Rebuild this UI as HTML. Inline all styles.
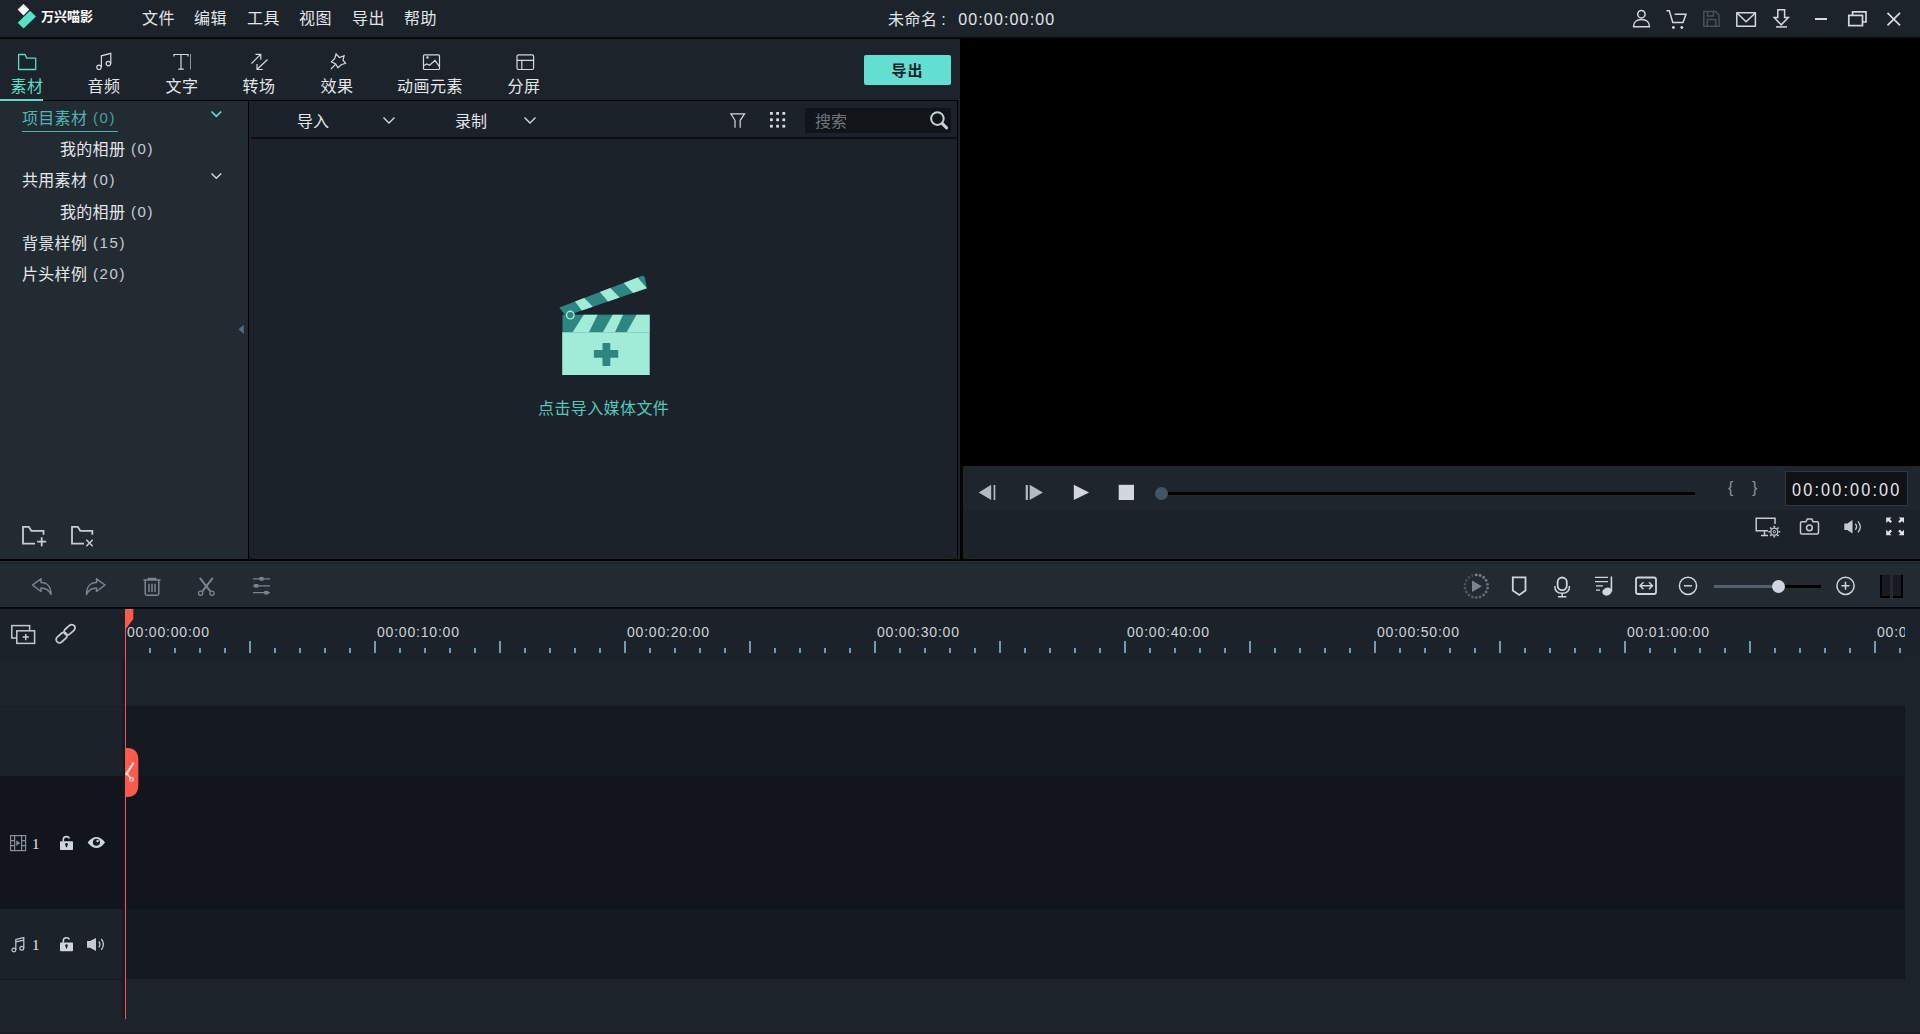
<!DOCTYPE html>
<html lang="zh-CN">
<head>
<meta charset="utf-8">
<title>万兴喵影</title>
<style>
*{box-sizing:border-box;margin:0;padding:0}
html,body{width:1920px;height:1034px;overflow:hidden;background:#1c232b}
body{position:relative;font-family:"Liberation Sans","Noto Sans CJK SC",sans-serif;color:#e2e6ea;font-size:16px}
.abs{position:absolute}
.t{position:absolute;white-space:nowrap;line-height:1}
#icons{position:absolute;left:0;top:0;width:1920px;height:1034px;overflow:hidden}
/* ---------- title bar ---------- */
#titlebar{left:0;top:0;width:1920px;height:37px;background:#1c232b}
#tb-line{left:0;top:36px;width:1920px;height:3px;background:linear-gradient(#181d24 0,#181d24 1px,#0b0e11 1px,#0b0e11 2px,#030405 2px)}
.menu{top:11px;letter-spacing:.5px;font-size:16px;color:#e2e6ea}
#brand{left:41px;top:10px;font-size:13px;font-weight:700;color:#fff}
#title{left:888px;top:12px;letter-spacing:.5px;font-size:16px;color:#e2e6ea}
#title span{letter-spacing:1.15px;margin-left:12px}
/* ---------- tabs ---------- */
#tabs{left:0;top:39px;width:960px;height:61px;background:#1c232b}
.tab{top:79px;letter-spacing:.5px;font-size:16px;color:#e2e6ea;transform:translateX(-50%)}
.tab.on{color:#5fd9c8}
#tab-ul{left:0;top:99px;width:43px;height:2px;background:#5fd9c8}
#tabs-line{left:0;top:100px;width:958px;height:1px;background:#050607}
#export{left:864px;top:55px;width:87px;height:30px;border-radius:2px;background:#63dfcf;color:#13222b;font-size:15px;letter-spacing:1px;padding-left:0;font-weight:700;text-align:center;line-height:31px}
/* ---------- tree ---------- */
#tree{left:0;top:101px;width:248px;height:458px;background:#222a32}
.tr{letter-spacing:.3px;font-size:16px;color:#e2e6ea}
.tr i{font-style:normal;letter-spacing:1.6px;font-size:15px;margin-left:0;position:relative;top:-1px;opacity:.85}
.tr.on{color:#52b4b0}
#tr-ul{left:22px;top:131px;width:96px;height:1px;background:#4fb0ad}
#vline1{left:248px;top:101px;width:1px;height:458px;background:#000}
/* ---------- media ---------- */
#media{left:249px;top:101px;width:708px;height:458px;background:#1c222a}
#media-tl{left:251px;top:137px;width:706px;height:2px;background:#0b0d10}
#vline2{left:957px;top:100px;width:1px;height:459px;background:#000}
#search{left:805px;top:108px;width:146px;height:25px;background:#111419}
.mt{top:114px;font-size:16px;color:#e2e6ea}
#import-tip{left:538px;top:401px;letter-spacing:.4px;font-size:16px;color:#55c7bd}
/* ---------- preview ---------- */
#preview{left:960px;top:39px;width:960px;height:427px;background:#000}
#pv-left{left:960px;top:466px;width:3px;height:93px;background:#000}
#pctl{left:963px;top:466px;width:957px;height:93px;background:linear-gradient(#1f252d 0,#1f252d 44px,#1c222a 44px)}
#ptrack{left:1162px;top:492px;width:533px;height:3px;background:#000}
#pknob{left:1155px;top:487px;width:13px;height:13px;border-radius:50%;background:#435560}
#ptime{left:1785px;top:471px;width:123px;height:35px;background:#0f1216;border:1px solid #2b3947;color:#e6e9ec;font-size:18px;line-height:36px;text-align:center;overflow:hidden}
#ptime span{display:inline-block;letter-spacing:2.4px;transform:scaleX(.9);transform-origin:50% 50%;margin-left:0;white-space:nowrap}
.brace{top:480px;font-size:16px;color:#8c9198}
/* ---------- timeline ---------- */
#hline-mid{left:0;top:559px;width:1920px;height:2px;background:#000}
#tlbar{left:0;top:561px;width:1920px;height:46px;background:#222a32}
#tlbar-sub{left:0;top:563px;width:1920px;height:1px;background:#1c2028}
#tlbar-line{left:0;top:607px;width:1920px;height:2px;background:#07090b}
#ruler{left:0;top:609px;width:1920px;height:48px;background:#1c222a}
#ruler-line{left:0;top:657px;width:1905px;height:2px;background:linear-gradient(#191f26 0,#191f26 1px,#151a21 1px)}
#minor{left:149px;top:648px;width:1756px;height:5px;background:repeating-linear-gradient(90deg,#7499b4 0,#7499b4 2px,transparent 2px,transparent 25px)}
#major{left:249px;top:641px;width:1656px;height:12px;background:repeating-linear-gradient(90deg,#7499b4 0,#7499b4 2px,transparent 2px,transparent 125px)}
.rl{top:625px;font-size:14px;letter-spacing:.8px;color:#cdd2d8}
#rclip{left:126px;top:609px;width:1779px;height:48px;overflow:hidden}
#rclip .rl{top:16px}
.row{left:0;width:1905px}
#hdr-sep{left:123px;top:659px;width:2px;height:360px;background:#131a20}
#zslot{left:1714px;top:585px;width:107px;height:3px;background:#000}
#zfill{left:1714px;top:585px;width:64px;height:3px;background:#52616f}
#zknob{left:1772px;top:580px;width:13px;height:13px;border-radius:50%;background:#d0d6dd}
.bar2{top:575px;width:10px;height:23px;background:#161a21;border:0 solid #000}
.num{font-family:"Liberation Serif",serif;font-size:15px;color:#e6e8ea}
#bottom-line{left:0;top:1032px;width:1920px;height:2px;background:#191d24}
</style>
</head>
<body>
<!-- title bar -->
<div id="titlebar" class="abs"></div>
<div id="tb-line" class="abs"></div>
<div id="brand" class="t">万兴喵影</div>
<div class="t menu" style="left:142px">文件</div>
<div class="t menu" style="left:194px">编辑</div>
<div class="t menu" style="left:247px">工具</div>
<div class="t menu" style="left:299px">视图</div>
<div class="t menu" style="left:352px">导出</div>
<div class="t menu" style="left:404px">帮助</div>
<div id="title" class="t">未命名&#8201;:<span>00:00:00:00</span></div>

<!-- tabs -->
<div id="tabs" class="abs"></div>
<div id="tabs-line" class="abs"></div>
<div id="tab-ul" class="abs"></div>
<div class="t tab on" style="left:27px">素材</div>
<div class="t tab" style="left:104px">音频</div>
<div class="t tab" style="left:182px">文字</div>
<div class="t tab" style="left:259px">转场</div>
<div class="t tab" style="left:337px">效果</div>
<div class="t tab" style="left:430px">动画元素</div>
<div class="t tab" style="left:524px">分屏</div>
<div id="export" class="abs">导出</div>

<!-- tree -->
<div id="tree" class="abs"></div>
<div id="vline1" class="abs"></div>
<div class="t tr on" style="left:22px;top:111px">项目素材<i> (0)</i></div>
<div id="tr-ul" class="abs"></div>
<div class="t tr" style="left:60px;top:142px">我的相册<i> (0)</i></div>
<div class="t tr" style="left:22px;top:173px">共用素材<i> (0)</i></div>
<div class="t tr" style="left:60px;top:205px">我的相册<i> (0)</i></div>
<div class="t tr" style="left:22px;top:236px">背景样例<i> (15)</i></div>
<div class="t tr" style="left:22px;top:267px">片头样例<i> (20)</i></div>

<!-- media -->
<div id="media" class="abs"></div>
<div id="media-tl" class="abs"></div>
<div id="vline2" class="abs"></div>
<div id="search" class="abs"></div>
<div class="t mt" style="left:297px">导入</div>
<div class="t mt" style="left:455px">录制</div>
<div class="t mt" style="left:815px;color:#70757c">搜索</div>
<div id="import-tip" class="t">点击导入媒体文件</div>

<!-- preview -->
<div id="preview" class="abs"></div>
<div id="pv-left" class="abs"></div>
<div id="pctl" class="abs"></div>
<div id="ptrack" class="abs"></div>
<div id="pknob" class="abs"></div>
<div class="t brace" style="left:1728px">{</div>
<div class="t brace" style="left:1752px">}</div>
<div id="ptime" class="abs"><span>00:00:00:00</span></div>

<!-- timeline -->
<div id="hline-mid" class="abs"></div>
<div id="tlbar" class="abs"></div>
<div id="tlbar-sub" class="abs"></div>
<div id="tlbar-line" class="abs"></div>
<div id="zslot" class="abs"></div>
<div id="zfill" class="abs"></div>
<div id="zknob" class="abs"></div>
<div class="abs bar2" style="left:1880px;border-left-width:2px;border-bottom-width:2px"></div>
<div class="abs bar2" style="left:1893px;border-right-width:2px;border-bottom-width:2px"></div>
<div id="ruler" class="abs"></div>
<div id="ruler-line" class="abs"></div>
<div id="minor" class="abs"></div>
<div id="major" class="abs"></div>
<div id="rclip" class="abs">
<div class="t rl" style="left:1px">00:00:00:00</div>
<div class="t rl" style="left:251px">00:00:10:00</div>
<div class="t rl" style="left:501px">00:00:20:00</div>
<div class="t rl" style="left:751px">00:00:30:00</div>
<div class="t rl" style="left:1001px">00:00:40:00</div>
<div class="t rl" style="left:1251px">00:00:50:00</div>
<div class="t rl" style="left:1501px">00:01:00:00</div>
<div class="t rl" style="left:1751px">00:01:10:00</div>
</div>
<!-- track rows -->
<div class="abs row" style="top:658px;height:48px;background:#1c232b"></div>
<div class="abs row" style="top:706px;height:70px;background:#151922;border-top:1px solid #12151b;border-right:1px solid #12151b"></div>
<div class="abs row" style="top:776px;height:133px;background:#12151d"></div>
<div class="abs row" style="top:909px;height:70px;background:#151922;border-right:1px solid #12151b"></div>
<!-- headers -->
<div class="abs" style="left:0;top:706px;width:123px;height:70px;background:#1c222a;border-top:1px solid #191d24"></div>
<div class="abs" style="left:0;top:909px;width:123px;height:70px;background:#1c222a"></div>
<div id="hdr-sep" class="abs"></div>
<div class="abs" style="left:0;top:979px;width:123px;height:1px;background:#161b22"></div>
<div class="t num" style="left:32px;top:837px">1</div>
<div class="t num" style="left:32px;top:938px">1</div>
<div id="bottom-line" class="abs"></div>

<!--ICONS-START-->
<svg id="icons" width="1920" height="1034" viewBox="0 0 1920 1034">
<!-- logo -->
<path d="M23.5 3.9 29.3 9.6 23.5 15.5 17.7 9.6Z" fill="#fff"/>
<path d="M30 10.7 36 16.4 23.6 28.6 17.7 22.7Z" fill="#55e3c6"/>
<!-- title bar right icons -->
<g fill="none" stroke="#d5d9de" stroke-width="1.5" stroke-linejoin="round">
<circle cx="1641.4" cy="14.2" r="3.7"/>
<path d="M1633.5 26.8C1633.5 22 1637 19.6 1641.4 19.6 1646 19.6 1649.5 22 1649.5 26.8Z"/>
<path d="M1666.5 10.7H1669.3L1672.8 22.5H1683L1686 14.2H1674.6" stroke-linejoin="miter"/>
<rect x="1736.8" y="12.8" width="18.6" height="13.5"/>
<path d="M1737 13 1746.1 21.8 1755.3 13"/>
<path d="M1777.8 9.7H1784.6V17.5H1788.3L1781.2 24.8 1774.2 17.5H1777.8Z" stroke-linejoin="miter"/>
<path d="M1776 26.9H1787"/>
</g>
<circle cx="1673.4" cy="27.5" r="1.4" fill="#d5d9de"/><circle cx="1681.8" cy="27.5" r="1.4" fill="#d5d9de"/>
<g fill="none" stroke="#4a4f57" stroke-width="1.5">
<path d="M1703.8 11.5H1715.5L1719 15V26.2H1703.8Z"/>
<path d="M1707.5 11.5V16H1713.5V11.5M1707.3 26.2V19.5H1715.7V26.2"/>
</g>
<g fill="none" stroke="#d5d9de" stroke-width="1.7">
<path d="M1815 19H1827" stroke-width="2"/>
<path d="M1852.6 15V11.9H1866V22H1863"/>
<rect x="1848.8" y="15.4" width="13.7" height="10.2"/>
<path d="M1887.5 12.8 1900 25.3M1900 12.8 1887.5 25.3"/>
</g>
<!-- tab icons -->
<path d="M18.6 54.5H25L26.8 58.2H35.7V69.5H18.6Z" fill="none" stroke="#5fd9c8" stroke-width="1.3" stroke-linejoin="round"/>
<g fill="none" stroke="#d5d9de" stroke-width="1.2">
<circle cx="99" cy="67.3" r="2.2"/><circle cx="108.4" cy="63.6" r="2.2"/>
<path d="M101.4 67V55.8L110.8 53.3V63.8"/>
<path d="M174 56.5V54.5H188V56.5M181 54.5V69.2M178.2 69.2H183.8"/>
<path d="M190.5 54V69.5" stroke="#8f959d" stroke-width="1"/>
<path d="M251.5 63.5 260.5 54.5M255.5 54.4H260.8V59.8M267.5 59.5 257.2 69.3M257 64V69.5H262.8"/>
<path d="M336.1 54 339.4 57.5 344.1 55.7 343 60 345.6 63.3 341.2 64.8 337.9 67.7 335.7 63.9 331.4 61.9 334.6 58.6ZM335.3 64.6 331 69"/>
<rect x="423.5" y="54.8" width="16" height="14.7" rx="1"/>
<path d="M424 65.6 426.8 64 429.6 65.2 435 60.3 439.3 66.3"/>
<rect x="517" y="54.8" width="16.6" height="14.7" rx="1.5"/>
<path d="M517 60.4H533.6M521.8 60.4V69.5"/>
</g>
<rect x="426.4" y="56.4" width="2.2" height="2.2" fill="#d5d9de"/>
<!-- tree chevrons -->
<path d="M211.5 111.5 216.3 116.3 221.2 111.5" fill="none" stroke="#5fe0d0" stroke-width="1.7"/>
<path d="M211.5 173.5 216.3 178.3 221.2 173.5" fill="none" stroke="#cfd4da" stroke-width="1.5"/>
<path d="M238.5 329.3 243.8 324.8V334Z" fill="#566a82"/>
<!-- media toolbar -->
<g fill="none" stroke="#d5d9de" stroke-width="1.4">
<path d="M383.5 117.5 389 123 394.5 117.5M524.5 117.5 530 123 535.5 117.5"/>
<path d="M735 127.8V120.3L730.9 113.8H744.6L740.2 120.3V127.8" stroke-width="1.2"/>
</g>
<g fill="#d5d9de">
<rect x="770" y="112" width="2.8" height="2.8"/><rect x="776.2" y="112" width="2.8" height="2.8"/><rect x="782.4" y="112" width="2.8" height="2.8"/>
<rect x="770" y="118.4" width="2.8" height="2.8"/><rect x="776.2" y="118.4" width="2.8" height="2.8"/><rect x="782.4" y="118.4" width="2.8" height="2.8"/>
<rect x="770" y="124.8" width="2.8" height="2.8"/><rect x="776.2" y="124.8" width="2.8" height="2.8"/><rect x="782.4" y="124.8" width="2.8" height="2.8"/>
</g>
<circle cx="937.4" cy="118.6" r="6.3" fill="none" stroke="#c9ced4" stroke-width="2"/>
<path d="M942.3 123.6 946.6 127.9" stroke="#c9ced4" stroke-width="3" stroke-linecap="round"/>
<!-- bottom-left folder icons -->
<g fill="none" stroke="#c8cdd3" stroke-width="1.8">
<path d="M35 543.6H23V526.8H28.8L31.3 530.8H43.5V534.8M37.2 541.7H46.2M41.7 537.2V546.2"/>
<path d="M84 543.6H72V526.8H77.8L80.3 530.8H92.3V534.8" />
<path d="M86.3 539.8 92.7 546.2M92.7 539.8 86.3 546.2" stroke-width="1.5"/>
</g>
<!-- clapper -->
<rect x="562.2" y="332" width="87.5" height="43" fill="#a1ecd9"/>
<rect x="562.5" y="314.7" width="87.2" height="17.6" fill="#2f8580"/>
<path d="M572.6 332.2 583.7 314.7H597.6L588.9 332.2ZM602.8 332.2 612.7 314.7H623.1L615 332.2ZM626.6 332.2 636.5 314.7H649.7V332.2Z" fill="#a1ecd9"/>
<path d="M559.3 307.4 641.7 276Q644.5 275.3 645 278L646.9 288.2 565.7 316Z" fill="#2f8580"/>
<path d="M575 301.4 584.2 297.9 592.9 306.7 581.9 310.5ZM599.9 291.9 610.3 288 619.6 297.5 608 301.5ZM623.7 282.9 637.6 277.6 646.9 288.2 633 293Z" fill="#a1ecd9"/>
<circle cx="570.3" cy="315.1" r="3.8" fill="#2f8580" stroke="#a1ecd9" stroke-width="1.4"/>
<path d="M593.9 350H602.5V343H610.3V350H618.2V357.8H610.3V366H602.5V357.8H593.9Z" fill="#2f8580"/>
<!-- preview transport -->
<g fill="#b4bac2">
<path d="M978.7 492.4 991.2 484.8V500Z"/><rect x="993.6" y="485" width="1.7" height="15"/>
<rect x="1025.7" y="485" width="2.2" height="15"/><path d="M1029.7 484.8 1042.9 492.4 1029.7 500Z"/>
</g>
<path d="M1073.8 484.8 1089.1 492.4 1073.8 500Z" fill="#d2d7de"/>
<rect x="1118.7" y="484.8" width="15.3" height="15.2" fill="#d2d7de"/>
<!-- preview bottom-right icons -->
<g fill="none" stroke="#c5cad1" stroke-width="1.5">
<path d="M1775 524V518.2H1756.2V530.8H1768M1764.5 531V535.3M1761 535.5H1768"/>
<circle cx="1774.3" cy="531.7" r="3.5" stroke-width="1.3"/>
<circle cx="1774.3" cy="531.7" r="1.2" stroke-width="1"/>
<path d="M1774.3 527.4V525.8M1774.3 536V537.6M1770 531.7H1768.4M1778.6 531.7H1780.2M1771.3 528.7 1770.1 527.5M1777.3 528.7 1778.5 527.5M1771.3 534.7 1770.1 535.9M1777.3 534.7 1778.5 535.9" stroke-width="1.6"/>
<path d="M1802 521.8H1806L1807.3 519H1811.8L1813 521.8H1817Q1818.5 521.8 1818.5 523.3V532.5Q1818.5 534 1817 534H1802Q1800.5 534 1800.5 532.5V523.3Q1800.5 521.8 1802 521.8Z"/>
<circle cx="1809.4" cy="527.8" r="2.9"/>
<path d="M1855.3 523.8Q1857.9 526.8 1855.3 529.8M1858 521.3Q1862.6 526.8 1858 532.3" stroke-width="1.3"/>
</g>
<path d="M1844.3 523.5H1847.3L1852.5 520V533.5L1847.3 530H1844.3Z" fill="#c5cad1"/>
<g fill="#dfe3e7">
<path d="M1886.2 517.5H1891.6L1889.8 519.3 1892 521.5 1890.4 523.1 1888.2 520.9 1886.2 522.9Z"/>
<path d="M1904 517.5H1898.6L1900.4 519.3 1898.2 521.5 1899.8 523.1 1902 520.9 1904 522.9Z"/>
<path d="M1886.2 535.2H1891.6L1889.8 533.4 1892 531.2 1890.4 529.6 1888.2 531.8 1886.2 529.8Z"/>
<path d="M1904 535.2H1898.6L1900.4 533.4 1898.2 531.2 1899.8 529.6 1902 531.8 1904 529.8Z"/>
</g>
<!-- timeline toolbar left (disabled grey) -->
<g fill="none" stroke="#7c848e" stroke-width="1.5" stroke-linejoin="round">
<path d="M32.5 585 41 578.8V582.5C47.2 582.5 51 587 51 594.5 49 590 46 588 41 588V591.5Z"/>
<path d="M105 585 96.5 578.8V582.5C90.3 582.5 86.5 587 86.5 594.5 88.5 590 91.5 588 96.5 588V591.5Z"/>
<path d="M143.5 580H160.5M148.3 579.7V578.4H155.7V579.7M145.2 580.2V593.5Q145.2 595.2 146.9 595.2H157.1Q158.8 595.2 158.8 593.5V580.2M149 583.8V592M152 583.8V592M155 583.8V592"/>
<path d="M199.8 577.8 210.3 591.3M212.8 577.8 202.3 591.3" stroke-width="2"/>
<circle cx="200.6" cy="593.2" r="2.1" stroke-width="1.3"/><circle cx="212" cy="593.2" r="2.1" stroke-width="1.3"/>
<path d="M253 578.8H270M253 585.8H270M253 592.7H270" stroke-width="1.2"/>
</g>
<g fill="#7c848e"><rect x="259.5" y="577" width="4" height="3.6"/><rect x="254.3" y="584" width="4" height="3.6"/><rect x="264.3" y="590.9" width="4" height="3.6"/></g>
<g fill="#7c848e"><circle cx="1476.2" cy="574.9" r="1.4" opacity="1.00"/><circle cx="1480.1" cy="575.5" r="1.4" opacity="0.96"/><circle cx="1483.6" cy="577.5" r="1.4" opacity="0.92"/><circle cx="1486.1" cy="580.5" r="1.4" opacity="0.88"/><circle cx="1487.5" cy="584.3" r="1.4" opacity="0.83"/><circle cx="1487.5" cy="588.2" r="1.4" opacity="0.79"/><circle cx="1486.1" cy="592.0" r="1.4" opacity="0.75"/><circle cx="1483.6" cy="595.0" r="1.4" opacity="0.71"/><circle cx="1480.1" cy="597.0" r="1.4" opacity="0.67"/><circle cx="1476.2" cy="597.6" r="1.4" opacity="0.62"/><circle cx="1472.4" cy="597.0" r="1.4" opacity="0.58"/><circle cx="1468.9" cy="595.0" r="1.4" opacity="0.54"/><circle cx="1466.4" cy="592.0" r="1.4" opacity="0.50"/><circle cx="1465.0" cy="588.2" r="1.4" opacity="0.46"/><circle cx="1465.0" cy="584.3" r="1.4" opacity="0.42"/><circle cx="1466.4" cy="580.5" r="1.4" opacity="0.38"/><circle cx="1468.9" cy="577.5" r="1.4" opacity="0.33"/><circle cx="1472.4" cy="575.5" r="1.4" opacity="0.29"/></g>
<path d="M1472 580.6 1481.9 586.25 1472 591.9Z" fill="#7c848e"/>
<!-- timeline toolbar right -->
<g fill="none" stroke="#d0d5db" stroke-width="1.8" stroke-linejoin="round">
<path d="M1512.8 577.3H1525.5V590.5L1519.2 595 1512.8 590.5Z" stroke-linejoin="miter"/>
<rect x="1557.6" y="577.5" width="9.2" height="12.6" rx="4.6"/>
<path d="M1554.8 586Q1554.8 593.3 1562.2 593.3 1569.5 593.3 1569.5 586M1562.2 593.5V596.3M1558 596.7H1566.4" stroke-width="1.5"/>
<path d="M1595 577.3H1608M1595 581.6H1608M1596 585.9H1603M1596 590.1H1600" stroke-width="1.3"/>
<path d="M1611.4 576.5V591.5" stroke-width="1.6"/>
<rect x="1636" y="577.5" width="20" height="16.5" rx="2"/>
<path d="M1640 585.8H1652.5M1643.5 582.3 1640 585.8 1643.5 589.3M1649 582.3 1652.5 585.8 1649 589.3" stroke-width="1.5"/>
<circle cx="1688" cy="585.8" r="8.6" stroke-width="1.5"/><path d="M1684 585.8H1692" stroke-width="1.5"/>
<circle cx="1845.5" cy="585.8" r="8.6" stroke-width="1.5"/><path d="M1841.5 585.8H1849.5M1845.5 581.8V589.8" stroke-width="1.5"/>
</g>
<ellipse cx="1607" cy="591.6" rx="4.8" ry="3.9" fill="#d0d5db" transform="rotate(-20 1607 591.6)"/>
<!-- track manager icons -->
<g fill="none" stroke="#c5cad1" stroke-width="1.5">
<rect x="11.8" y="625.6" width="17.8" height="12.4"/>
<rect x="16.8" y="630.8" width="17.8" height="12.6" fill="#1c222a"/>
<path d="M22.6 637.1H28.9M25.75 634V640.3"/>
<rect x="-6.2" y="-3.3" width="12.4" height="6.6" rx="3.3" transform="translate(61.6 637.6) rotate(-42)" stroke-width="1.8"/>
<rect x="-6.2" y="-3.3" width="12.4" height="6.6" rx="3.3" transform="translate(69.6 629.8) rotate(-42)" stroke-width="1.8"/>
</g>
<!-- playhead -->
<rect x="125" y="609" width="1" height="410" fill="#f9584c"/>
<path d="M125 609H133.3V619L126.2 628.5H125Z" fill="#fb5a4d"/>
<path d="M126 748H127Q138.3 748 138.3 760V785Q138.3 797 127 797H126Z" fill="#fb5a4d"/>
<g fill="none" stroke="#f6d9d4" stroke-width="1.3" stroke-linecap="round">
<path d="M133.2 763.4 126.4 774.2" stroke-width="2.2"/><path d="M126.3 772.8 130.4 777.8" stroke-width="1.6"/>
<circle cx="131.5" cy="779.4" r="1.8" stroke-width="1.2"/>
</g>
<!-- video track header -->
<g fill="none" stroke="#8a8f96" stroke-width="1.2">
<rect x="10.6" y="835.6" width="15" height="15"/>
<path d="M14.6 835.6V850.6M21.6 835.6V850.6M10.6 840.6H14.6M10.6 845.6H14.6M21.6 840.6H25.6M21.6 845.6H25.6"/>
</g>
<path d="M16.3 840.3 20.2 843.1 16.3 845.9Z" fill="#8a8f96"/>
<g id="lock">
<rect x="60" y="841.3" width="13" height="8.8" rx=".8" fill="#d0d5db"/>
<path d="M63.3 841.5V839.6Q63.3 836.6 66.3 836.6 68.8 836.6 69.4 838.4" fill="none" stroke="#d0d5db" stroke-width="1.6"/>
<path d="M65.2 844.4A1.3 1.3 0 1 1 67.8 844.4L66.9 847.2H66.1Z" fill="#12161d"/>
</g>
<path d="M87.6 842.4Q96.4 831.4 105.1 842.4 96.4 853.4 87.6 842.4Z" fill="#d0d5db"/>
<circle cx="96.4" cy="842.2" r="3.5" fill="#12161d"/><circle cx="97.6" cy="840.9" r="1.2" fill="#d0d5db"/>
<!-- audio track header -->
<g fill="none" stroke="#c5cad1" stroke-width="1.2">
<circle cx="13.9" cy="950" r="1.9"/><circle cx="21.8" cy="948.2" r="1.9"/>
<path d="M15.8 950V939.4L23.8 937.6V948.2M15.8 941.9 23.8 940.1"/>
<path d="M98.8 941.5Q101.1 944.4 98.8 947.3M101.3 939Q105.6 944.4 101.3 949.8" stroke-width="1.3"/>
</g>
<g transform="translate(0 101.2)">
<rect x="60" y="841.3" width="13" height="8.8" rx=".8" fill="#d0d5db"/>
<path d="M63.3 841.5V839.6Q63.3 836.6 66.3 836.6 68.8 836.6 69.4 838.4" fill="none" stroke="#d0d5db" stroke-width="1.6"/>
<path d="M65.2 844.4A1.3 1.3 0 1 1 67.8 844.4L66.9 847.2H66.1Z" fill="#1c222a"/>
</g>
<path d="M87 941H90L96 937.9V950.9L90 947.8H87Z" fill="#c5cad1"/>
</svg>

<!--ICONS-END-->
</body>
</html>
